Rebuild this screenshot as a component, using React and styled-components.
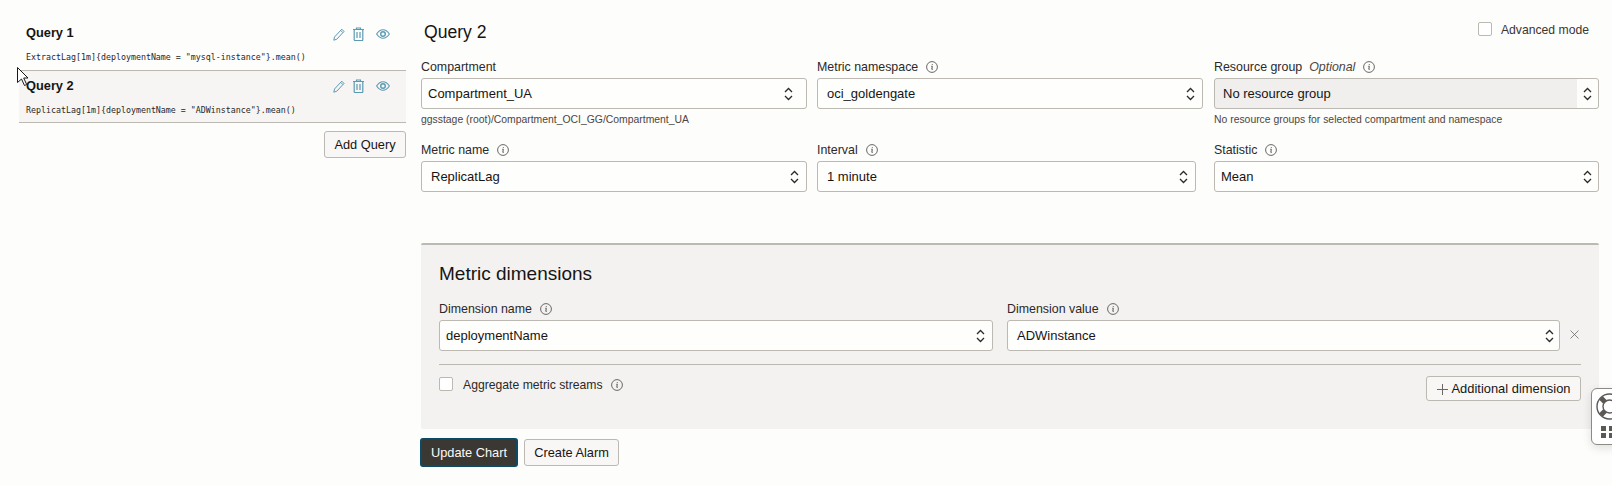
import styled, { createGlobalStyle } from "styled-components";

const Global = createGlobalStyle`
  html, body { margin: 0; padding: 0; background: #fdfdfc; }
  body { font-family: "Liberation Sans", Arial, sans-serif; color: #1a1816; overflow: hidden; }
`;

const Page = styled.div`
  position: relative;
  display: flex;
  width: 1612px;
  height: 485px;
  overflow: hidden;
  background: #fdfdfc;
`;

const Sidebar = styled.div`
  width: 387px;
  margin-left: 19px;
  padding-top: 19px;
  flex: none;
`;

const QueryItem = styled.div`
  height: 52px;
  padding: ${(p) => (p.$active ? 7 : 6)}px 0 0 7px;
  box-sizing: border-box;
  border-bottom: 1px solid #bcb8b2;
  background: ${(p) => (p.$active ? "#f6f5f4" : "transparent")};
`;

const QueryHead = styled.div`
  display: flex;
  justify-content: space-between;
  align-items: center;
  height: 15px;
  padding-right: 16px;
`;

const QueryTitle = styled.div`
  font-size: 12.8px;
  font-weight: 700;
  color: #161513;
`;

const IconRow = styled.div`
  display: flex;
  align-items: center;
  gap: 8px;
  margin-top: ${(p) => (p.$active ? 1 : 3)}px;
  color: #5a9ab3;
  svg:last-child { margin-left: 4px; }
`;

const QueryCode = styled.div`
  font-family: "DejaVu Sans Mono", "Liberation Mono", monospace;
  font-size: 8.3px;
  line-height: 12px;
  margin-top: 11px;
  color: #2a2725;
  white-space: nowrap;
`;

const SideActions = styled.div`
  display: flex;
  justify-content: flex-end;
  margin-top: 8px;
`;

const Button = styled.button`
  display: inline-flex;
  align-items: center;
  justify-content: center;
  gap: ${(p) => p.$gap || 0}px;
  box-sizing: border-box;
  width: ${(p) => p.$w}px;
  height: ${(p) => p.$h}px;
  padding: 0;
  font-family: inherit;
  font-size: ${(p) => p.$size || 12.8}px;
  color: ${(p) => (p.$primary ? "#fbf9f8" : "#161513")};
  background: ${(p) => (p.$primary ? "#3b3733" : "#f8f7f6")};
  border: ${(p) => (p.$primary ? "2px solid #0d4a63" : "1px solid #bcb8b2")};
  border-radius: 3px;
`;

const Main = styled.div`
  width: 1178px;
  margin-left: 15px;
  flex: none;
`;

const MainHead = styled.div`
  display: flex;
  justify-content: space-between;
  height: 59px;
  padding-top: 22px;
  box-sizing: border-box;
`;

const Heading = styled.h2`
  margin: ${(p) => (p.$panel ? "0 0 17px" : "0 0 0 3px")};
  font-size: ${(p) => (p.$panel ? 19 : 17.6)}px;
  line-height: 20px;
  font-weight: 400;
  color: #161513;
`;

const Advanced = styled.label`
  display: flex;
  align-items: flex-start;
  gap: 9px;
  font-size: 12.2px;
  line-height: 16px;
  color: #3a3633;
  margin-right: 10px;
`;

const Check = styled.span`
  display: block;
  flex: none;
  width: 14px;
  height: 14px;
  box-sizing: border-box;
  background: #fff;
  border: 1px solid #bcb8b2;
  border-radius: 2px;
`;

const Row = styled.div`
  display: flex;
  height: ${(p) => p.$h}px;
`;

const Field = styled.div`
  width: ${(p) => p.$w}px;
  margin-right: ${(p) => p.$mr || 0}px;
  flex: none;
`;

const Label = styled.div`
  display: flex;
  align-items: center;
  gap: 8px;
  box-sizing: border-box;
  height: 14px;
  padding-top: 2px;
  margin-bottom: 5px;
  font-size: 12.4px;
  line-height: 14px;
  color: #2c2927;
  em { color: #4a4643; margin-left: -1px; }
`;

const Select = styled.div`
  display: flex;
  align-items: center;
  justify-content: space-between;
  box-sizing: border-box;
  height: 31px;
  padding: 0 ${(p) => p.$pr || 10}px 0 ${(p) => p.$pl}px;
  font-size: 13px;
  color: #161513;
  background: ${(p) => (p.$disabled ? "linear-gradient(to right, #f0efee calc(100% - 21px), #fdfdfc 21px)" : "#fefefd")};
  border: 1px solid #bcb8b2;
  border-radius: 3px;
`;

const Help = styled.div`
  margin-top: 5px;
  font-size: 10.4px;
  line-height: 12px;
  color: #4a4643;
  white-space: nowrap;
`;

const Panel = styled.section`
  margin-top: 51px;
  height: 186px;
  box-sizing: border-box;
  padding: 19px 18px 0;
  background: #f3f2f1;
  border-top: 2px solid #bcb8b2;
  border-radius: 2px;
`;

const DimRow = styled.div`
  display: flex;
  align-items: flex-end;
  padding-bottom: 13px;
  border-bottom: 1px solid #bcb8b2;
  width: 1142px;
`;

const ClearBtn = styled.span`
  display: flex;
  margin: 0 0 12px 10px;
  color: #6b6764;
`;

const PanelFoot = styled.div`
  display: flex;
  justify-content: space-between;
  align-items: flex-start;
  width: 1142px;
  padding-top: 11px;
`;

const AggLabel = styled.label`
  display: flex;
  align-items: flex-start;
  gap: 10px;
  padding-top: 1px;
  font-size: 12.2px;
  color: #2c2927;
`;

const AggText = styled.span`
  display: flex;
  align-items: center;
  gap: 8px;
  height: 16px;
`;

const Actions = styled.div`
  display: flex;
  align-items: center;
  gap: 6px;
  margin: 9px 0 0 -1px;
`;

const Widget = styled.div`
  position: absolute;
  left: 1591px;
  top: 388px;
  width: 30px;
  height: 57px;
  box-sizing: border-box;
  padding: 4px 0 0 4px;
  background: #fff;
  border: 1px solid #8d8985;
  border-radius: 6px;
  box-shadow: 0 3px 10px rgba(0, 0, 0, 0.12);
`;

const Cursor = styled.svg`
  position: absolute;
  left: 17px;
  top: 67px;
`;

const Pencil = () => (
  <svg width="12" height="13" viewBox="0 0 12 13" fill="none" stroke="currentColor" strokeWidth="1">
    <path d="M.8 12.2l.7-3.2L8.8 1.2l2.2 2.2-7.2 7.8zM7.7 2.4l2.2 2.2" />
  </svg>
);

const Trash = () => (
  <svg width="11" height="14" viewBox="0 0 11 14" fill="none" stroke="currentColor" strokeWidth="1.2">
    <path d="M0 2.5h11M3.5 2.5V1h4v1.5M1.2 2.5v10.2q0 .8.8.8h7q.8 0 .8-.8V2.5M4 5v6M7 5v6" />
  </svg>
);

const Eye = () => (
  <svg width="14" height="10" viewBox="0 0 14 10" fill="none" stroke="currentColor" strokeWidth="1.1">
    <path d="M.6 5C2.8 1.8 4.8.8 7 .8s4.2 1 6.4 4.2C11.2 8.2 9.2 9.2 7 9.2S2.8 8.2.6 5z" />
    <circle cx="7" cy="5" r="2.3" strokeWidth="1.4" />
  </svg>
);

const Info = () => (
  <svg width="12" height="12" viewBox="0 0 12 12" fill="none">
    <circle cx="6" cy="6" r="5.4" stroke="#6b6764" />
    <path d="M6.3 3.2v.9M5.3 5.3h1l-.5 3h1" stroke="#4a4643" strokeWidth=".9" />
  </svg>
);

const Updown = () => (
  <svg width="9" height="14" viewBox="0 0 9 14" fill="none" stroke="#2c2927" strokeWidth="1.3" style={{ flex: "none" }}>
    <path d="M1 5l3.5-3.5L8 5M1 9l3.5 3.5L8 9" />
  </svg>
);

const Close = () => (
  <svg width="9" height="9" viewBox="0 0 9 9" fill="none" stroke="currentColor" strokeWidth=".8">
    <path d="M.5.5l8 8M8.5.5l-8 8" />
  </svg>
);

const Plus = () => (
  <svg width="11" height="11" viewBox="0 0 11 11" fill="none" stroke="#6b6764" strokeWidth="1" style={{ marginTop: 2 }}>
    <path d="M5.5 0v11M0 5.5h11" />
  </svg>
);

const Lifebuoy = () => (
  <svg width="27" height="27" viewBox="0 0 27 27" fill="none" stroke="#5c5854" style={{ display: "block" }}>
    <circle cx="13.5" cy="13.5" r="12.5" strokeWidth="1.4" />
    <circle cx="13.5" cy="13.5" r="6.5" strokeWidth="1.4" />
    <path d="M5 5l4 4M22 5l-4 4M5 22l4-4M22 22l-4-4" strokeWidth="5" />
  </svg>
);

const Grid = () => (
  <svg width="20" height="12" viewBox="0 0 20 12" fill="#5c5854" style={{ display: "block", margin: "6px 0 0 5px" }}>
    <rect width="5" height="5" />
    <rect x="8" width="5" height="5" />
    <rect y="7" width="5" height="5" />
    <rect x="8" y="7" width="5" height="5" />
  </svg>
);

const queries = [
  { title: "Query 1", code: 'ExtractLag[1m]{deploymentName = "mysql-instance"}.mean()' },
  { title: "Query 2", code: 'ReplicatLag[1m]{deploymentName = "ADWinstance"}.mean()', active: true },
];

export default function App() {
  return (
    <Page>
      <Global />
      <Sidebar>
        {queries.map((q) => (
          <QueryItem key={q.title} $active={q.active}>
            <QueryHead>
              <QueryTitle>{q.title}</QueryTitle>
              <IconRow $active={q.active}>
                <Pencil />
                <Trash />
                <Eye />
              </IconRow>
            </QueryHead>
            <QueryCode>{q.code}</QueryCode>
          </QueryItem>
        ))}
        <SideActions>
          <Button $w={82} $h={27}>Add Query</Button>
        </SideActions>
      </Sidebar>

      <Main>
        <MainHead>
          <Heading>Query 2</Heading>
          <Advanced>
            <Check />
            Advanced mode
          </Advanced>
        </MainHead>

        <Row $h={83}>
          <Field $w={386} $mr={10}>
            <Label>Compartment</Label>
            <Select $pl={6} $pr={13}>Compartment_UA<Updown /></Select>
            <Help>ggsstage (root)/Compartment_OCI_GG/Compartment_UA</Help>
          </Field>
          <Field $w={386} $mr={11}>
            <Label>Metric namespace <Info /></Label>
            <Select $pl={9} $pr={7}>oci_goldengate<Updown /></Select>
          </Field>
          <Field $w={385}>
            <Label>Resource group <em>Optional</em> <Info /></Label>
            <Select $pl={8} $pr={6} $disabled>No resource group<Updown /></Select>
            <Help>No resource groups for selected compartment and namespace</Help>
          </Field>
        </Row>

        <Row $h={50}>
          <Field $w={386} $mr={10}>
            <Label>Metric name <Info /></Label>
            <Select $pl={9} $pr={7}>ReplicatLag<Updown /></Select>
          </Field>
          <Field $w={379} $mr={18}>
            <Label>Interval <Info /></Label>
            <Select $pl={9} $pr={7}>1 minute<Updown /></Select>
          </Field>
          <Field $w={385}>
            <Label>Statistic <Info /></Label>
            <Select $pl={6} $pr={6}>Mean<Updown /></Select>
          </Field>
        </Row>

        <Panel>
          <Heading $panel>Metric dimensions</Heading>
          <DimRow>
            <Field $w={554} $mr={14}>
              <Label>Dimension name <Info /></Label>
              <Select $pl={6} $pr={7}>deploymentName<Updown /></Select>
            </Field>
            <Field $w={553}>
              <Label>Dimension value <Info /></Label>
              <Select $pl={9} $pr={5}>ADWinstance<Updown /></Select>
            </Field>
            <ClearBtn><Close /></ClearBtn>
          </DimRow>
          <PanelFoot>
            <AggLabel>
              <Check />
              <AggText>Aggregate metric streams <Info /></AggText>
            </AggLabel>
            <Button $w={155} $h={25} $size={12.9} $gap={4}><Plus />Additional dimension</Button>
          </PanelFoot>
        </Panel>

        <Actions>
          <Button $primary $w={98} $h={29}>Update Chart</Button>
          <Button $w={95} $h={27}>Create Alarm</Button>
        </Actions>
      </Main>

      <Widget>
        <Lifebuoy />
        <Grid />
      </Widget>

      <Cursor width="12" height="20" viewBox="0 0 12 20">
        <path d="M.5.5v15l4-3.5 3 6.5 2.2-1-3-6.5H11z" fill="#fff" stroke="#1a1816" strokeWidth="1" />
      </Cursor>
    </Page>
  );
}
